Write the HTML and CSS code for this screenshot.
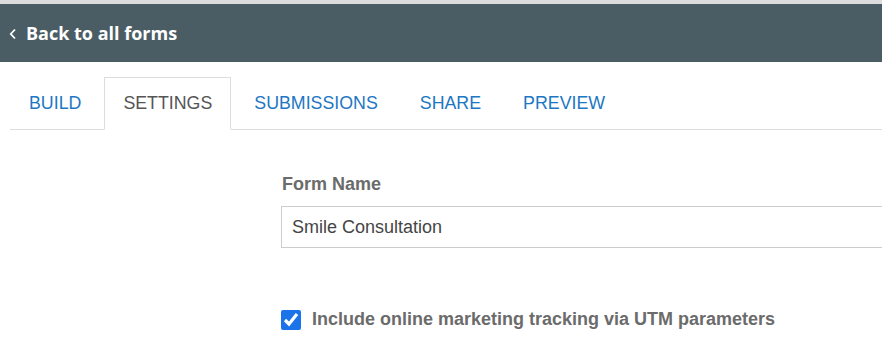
FILE: index.html
```html
<!DOCTYPE html>
<html lang="en">
<head>
    <meta charset="UTF-8">
    <meta name="viewport" content="width=device-width, initial-scale=1.0">
    <title>Form Settings</title>
    <link rel="stylesheet" href="styles.css">
</head>
<body>

<header class="top-bar">
    <a class="back-link" href="#">
        <svg class="chevron" width="8" height="12" viewBox="0 0 8 12">
            <path d="M6 1.5 L1.8 6 L6 10.5" fill="none" stroke="#fff" stroke-width="1.8"/>
        </svg>
        Back to all forms
    </a>
</header>

<ul class="tabs">
    <li class="tab"><a href="#">BUILD</a></li>
    <li class="tab active"><a href="#">SETTINGS</a></li>
    <li class="tab"><a href="#">SUBMISSIONS</a></li>
    <li class="tab"><a href="#">SHARE</a></li>
    <li class="tab"><a href="#">PREVIEW</a></li>
</ul>

<div class="settings">
    <label class="field-label" for="formName">Form Name</label>
    <input class="text-input" type="text" id="formName" value="Smile Consultation">

    <label class="check-row">
        <input type="checkbox" checked>
        <span>Include online marketing tracking via UTM parameters</span>
    </label>
</div>

</body>
</html>
```

FILE: styles.css
```css
body {
    margin: 0;
    font-family: "Liberation Sans", Arial, sans-serif;
    background: #fff;
    overflow: hidden;
    border-top: 4px solid #dcdcdc;
}
.top-bar {
    height: 58px;
    background-color: #4a5d64;
    display: flex;
    align-items: center;
    padding-left: 9px;
}
.back-link {
    font-family: "Open Sans", sans-serif;
    font-weight: 700;
    font-size: 18px;
    color: #fff;
    text-decoration: none;
    display: flex;
    align-items: center;
    gap: 9px;
}
.chevron {
    margin-top: 1px;
}
.tabs {
    list-style: none;
    margin: 15px 0 0 10px;
    padding: 0;
    display: flex;
    border-bottom: 1px solid #ddd;
}
.tab {
    margin-right: 4px;
    margin-bottom: -1px;
    border: 1px solid transparent;
}
.tab a {
    display: block;
    padding: 0 18px;
    height: 51px;
    line-height: 51px;
    font-size: 17.8px;
    color: #1d77c3;
    text-decoration: none;
}
.tab.active {
    border-color: #ddd;
    border-bottom-color: #fff;
    background: #fff;
}
.tab.active a {
    color: #555;
}
.settings {
    margin-left: 281px;
    padding-top: 44px;
}
.field-label {
    display: block;
    font-weight: 700;
    font-size: 18px;
    color: #6b6b6b;
    margin-left: 1px;
}
.text-input {
    display: block;
    margin-top: 11px;
    width: 700px;
    height: 42px;
    box-sizing: border-box;
    border: 1px solid #ccc;
    padding: 0 10px;
    font-family: "Liberation Sans", Arial, sans-serif;
    font-size: 18px;
    color: #454545;
}
.check-row {
    display: flex;
    align-items: center;
    gap: 11px;
    margin-top: 62px;
    font-weight: 700;
    font-size: 18px;
    color: #6b6b6b;
}
.check-row span {
    margin-top: -2px;
}
.check-row input {
    width: 20px;
    height: 20px;
    margin: 0;
    accent-color: #1a73e8;
}
```
